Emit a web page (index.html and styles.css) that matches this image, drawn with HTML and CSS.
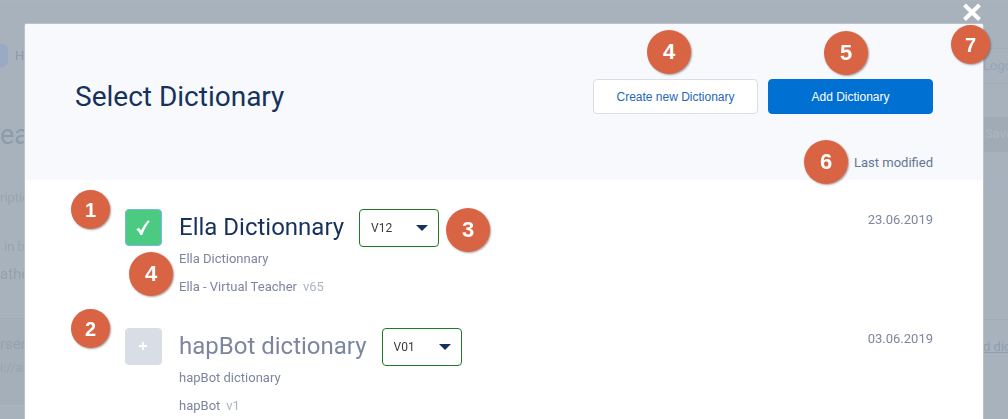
FILE: index.html
```html
<!DOCTYPE html>
<html lang="en">
<head>
<meta charset="utf-8">
<meta name="viewport" content="width=device-width, initial-scale=1">
<title>Select Dictionary</title>
<link rel="stylesheet" href="styles.css">
</head>
<body>
<div class="backdrop" aria-hidden="true">
  <div class="edge edge-left">
    <div class="edge-nav"><span class="chip"></span><span>H</span></div>
    <div class="edge-title">ea</div>
    <div class="edge-text">riptio</div>
    <div class="edge-text edge-note">in b</div>
    <div class="edge-value">athe</div>
    <div class="edge-card">
      <div class="edge-value">rser</div>
      <div class="edge-text">i://ai</div>
    </div>
  </div>
  <div class="edge edge-right">
    <div class="edge-logout">Logout</div>
    <div class="edge-save">Save</div>
    <div class="edge-link">d dict</div>
  </div>
</div>

<main class="modal" role="dialog" aria-labelledby="dialog-title">
  <button class="close" type="button" aria-label="Close">
    <svg viewBox="0 0 20 20" width="20" height="20"><path d="M2.5 3 17.500 17.500M17.500 3 2.500 17.500"/></svg>
  </button>
  <span class="badge badge-small badge-close">7</span>

  <header class="head">
    <div class="head-bar">
      <h1 class="title" id="dialog-title">Select Dictionary</h1>
      <div class="actions">
        <div class="anchor">
          <button class="btn btn-plain" type="button">Create new Dictionary</button>
          <span class="badge badge-create">4</span>
        </div>
        <div class="anchor">
          <button class="btn btn-primary" type="button">Add Dictionary</button>
          <span class="badge badge-add">5</span>
        </div>
      </div>
    </div>
    <div class="sort anchor"><span class="badge badge-sort">6</span>Last modified</div>
  </header>

  <section class="list">
    <article class="row anchor">
      <span class="badge badge-small badge-row">1</span>
      <span class="badge badge-detail">4</span>
      <div class="pick">
        <input class="pick-box" type="checkbox" id="pick-ella" aria-label="Ella Dictionnary" checked>
        <svg class="pick-mark" viewBox="0 0 36 36" width="36" height="36"><path class="check" d="M11.200 20.600 13.800 18.700 16.200 21.500C18 17.500 20.200 14.200 23.200 11.200L24.700 12.200C21.700 16 19.200 20.500 17.200 26L15.400 26C14.300 23.500 13 21.800 11.200 20.600Z"/></svg>
      </div>
      <div class="info">
        <div class="name-line">
          <label class="name name-active" for="pick-ella">Ella Dictionnary</label>
          <div class="version">
            <select class="version-select" aria-label="Ella Dictionnary version"><option>V12</option></select>
            <svg class="arrow" viewBox="0 0 12 6" width="12" height="6"><path d="M0 0H12L6 6Z"/></svg>
            <span class="badge badge-version">3</span>
          </div>
        </div>
        <p class="meta">Ella Dictionnary</p>
        <p class="meta">Ella - Virtual Teacher<span class="rev">v65</span></p>
      </div>
      <time class="date" datetime="2019-06-23">23.06.2019</time>
    </article>

    <article class="row anchor">
      <span class="badge badge-small badge-row">2</span>
      <div class="pick">
        <input class="pick-box" type="checkbox" id="pick-hapbot" aria-label="hapBot dictionary">
        <svg class="pick-mark" viewBox="0 0 36 36" width="36" height="36"><path class="plus" d="M18 14V22M14 18H22"/></svg>
      </div>
      <div class="info">
        <div class="name-line">
          <label class="name" for="pick-hapbot">hapBot dictionary</label>
          <div class="version">
            <select class="version-select" aria-label="hapBot dictionary version"><option>V01</option></select>
            <svg class="arrow" viewBox="0 0 12 6" width="12" height="6"><path d="M0 0H12L6 6Z"/></svg>
          </div>
        </div>
        <p class="meta">hapBot dictionary</p>
        <p class="meta">hapBot<span class="rev">v1</span></p>
      </div>
      <time class="date" datetime="2019-06-03">03.06.2019</time>
    </article>
  </section>
</main>
</body>
</html>
```
FILE: styles.css
```css
* { box-sizing: border-box; }

body {
  margin: 0;
  min-height: 100vh;
  display: flex;
  flex-direction: column;
  background: #a8b2bc;
  font-family: Roboto, "Liberation Sans", sans-serif;
  font-size: 13px;
  line-height: 16px;
}

h1, p { margin: 0; font-weight: 400; }

/* dimmed page behind the dialog */
.backdrop {
  position: fixed;
  inset: 0;
  display: flex;
  justify-content: space-between;
  overflow: hidden;
  border-top: 1px solid #b0b3b6;
  color: #98a4b1;
}

.edge {
  width: 25px;
  overflow: hidden;
  white-space: nowrap;
}

.edge-left { padding-top: 43px; }
.edge-nav { display: flex; align-items: center; gap: 7px; color: #8c9aab; }
.chip { width: 8px; height: 23px; border-radius: 0 6px 6px 0; background: #98abc2; }
.edge-title { margin-top: 52px; font-size: 27px; line-height: 32px; color: #8d9bab; }
.edge-left > .edge-text { margin-top: 39px; }
.edge-left > .edge-note { margin-top: 33px; padding-left: 4px; }
.edge-value { margin-top: 9px; font-size: 15px; line-height: 20px; color: #95a1af; }
.edge-card {
  margin-top: 34px;
  padding-top: 6px;
  height: 88px;
  background: #a4afb9;
  border-top: 1px solid #a1acb6;
  border-bottom: 1px solid #adb7c0;
}
.edge-card .edge-text { margin-top: 6px; }

.edge-right { padding-top: 47px; }
.edge-logout { padding: 9px 0; border: solid #a0acb7; border-width: 1px 0; color: #94a5b9; }
.edge-save { margin-top: 33px; padding: 9px 0 10px 2px; background: #a0abb5; color: #abb5be; font-weight: 500; }
.edge-link { margin-top: 167px; padding-top: 19px; border-top: 1px solid #a0abb6; color: #8c9fb3; text-decoration: underline; }

/* dialog */
.modal {
  position: relative;
  flex: 1;
  margin: 24px 25px 0;
  background: #fff;
  border-radius: 2px 2px 0 0;
  box-shadow: 0 0 0 1px #bcc2c8;
}

.anchor { position: relative; }

.close {
  position: absolute;
  top: -22px;
  right: 1px;
  padding: 0;
  border: 0;
  background: none;
  line-height: 0;
  cursor: pointer;
}
.close path { stroke: #fff; stroke-width: 4; fill: none; }

.head {
  padding: 55px 50px 9px;
  background: #f8f9fc;
  border-radius: 2px 2px 0 0;
}
.head-bar { display: flex; align-items: center; justify-content: space-between; }
.title { font-size: 28px; line-height: 35px; color: #16325c; }
.actions { display: flex; gap: 10px; }

.btn {
  display: block;
  width: 165px;
  height: 35px;
  padding: 0;
  border: 1px solid #0070d2;
  border-radius: 4px;
  font-family: "Liberation Sans", Arial, sans-serif;
  font-size: 12px;
  cursor: pointer;
}
.btn-plain { background: #fff; border-color: #d8dde6; color: #2468b8; }
.btn-primary { background: #0070d2; color: #fff; }

.sort { width: max-content; margin: 41px 0 0 auto; color: #637794; }

.list {
  display: flex;
  flex-direction: column;
  gap: 33px;
  padding: 29px 50px 0 100px;
}
.row { display: flex; align-items: flex-start; }

.pick { display: grid; margin-right: 17px; }
.pick-box, .pick-mark { grid-area: 1 / 1; }
.pick-box {
  appearance: none;
  margin: 0;
  width: 37px;
  height: 37px;
  border: 1px solid #d8dde6;
  border-radius: 4px;
  background: #d8dde6;
  cursor: pointer;
}
.pick-box:checked { background: #4bca81; border-color: #7ab6e8; }
.pick-mark { pointer-events: none; }
.check { fill: #fff; }
.plus { stroke: #fff; stroke-width: 2; fill: none; }

.info { flex: 1; }
.name-line { display: flex; align-items: flex-start; gap: 15px; margin-bottom: 4px; }
.name { font-size: 24px; line-height: 36px; color: #7d86a0; }
.name-active { color: #16325c; }

.version { display: flex; align-items: center; position: relative; }
.version-select {
  appearance: none;
  width: 80px;
  height: 38px;
  padding: 0 11px;
  border: 1px solid #1d7a24;
  border-radius: 4px;
  background: #fff;
  color: #3a3a3a;
  font-family: Roboto, "Liberation Sans", sans-serif;
  font-size: 12px;
}
.arrow { position: absolute; right: 11px; fill: #16325c; pointer-events: none; }

.meta { color: #7d86a0; }
.meta + .meta { margin-top: 12px; }
.rev { margin-left: 6px; color: #aab6c4; }
.date { padding-top: 3px; color: #7d86a0; }

/* numbered callouts */
.badge {
  position: absolute;
  z-index: 1;
  display: flex;
  align-items: center;
  justify-content: center;
  width: 44px;
  height: 44px;
  border-radius: 50%;
  background: #d96444;
  box-shadow: 1px 1px 2px rgba(60, 40, 40, 0.45);
  color: #fff;
  font-family: "Liberation Sans", Arial, sans-serif;
  font-size: 22px;
  font-weight: 700;
}
.badge-small { width: 39px; height: 39px; font-size: 20px; }
.badge-close { top: 1px; right: -7px; }
.badge-create { top: -49px; left: 54px; }
.badge-add { top: -48px; left: 56px; }
.badge-sort { top: -15px; right: 85px; }
.badge-row { top: -19px; left: -54px; }
.badge-detail { top: 43px; left: 4px; }
.badge-version { top: -1px; left: 87px; }
```
